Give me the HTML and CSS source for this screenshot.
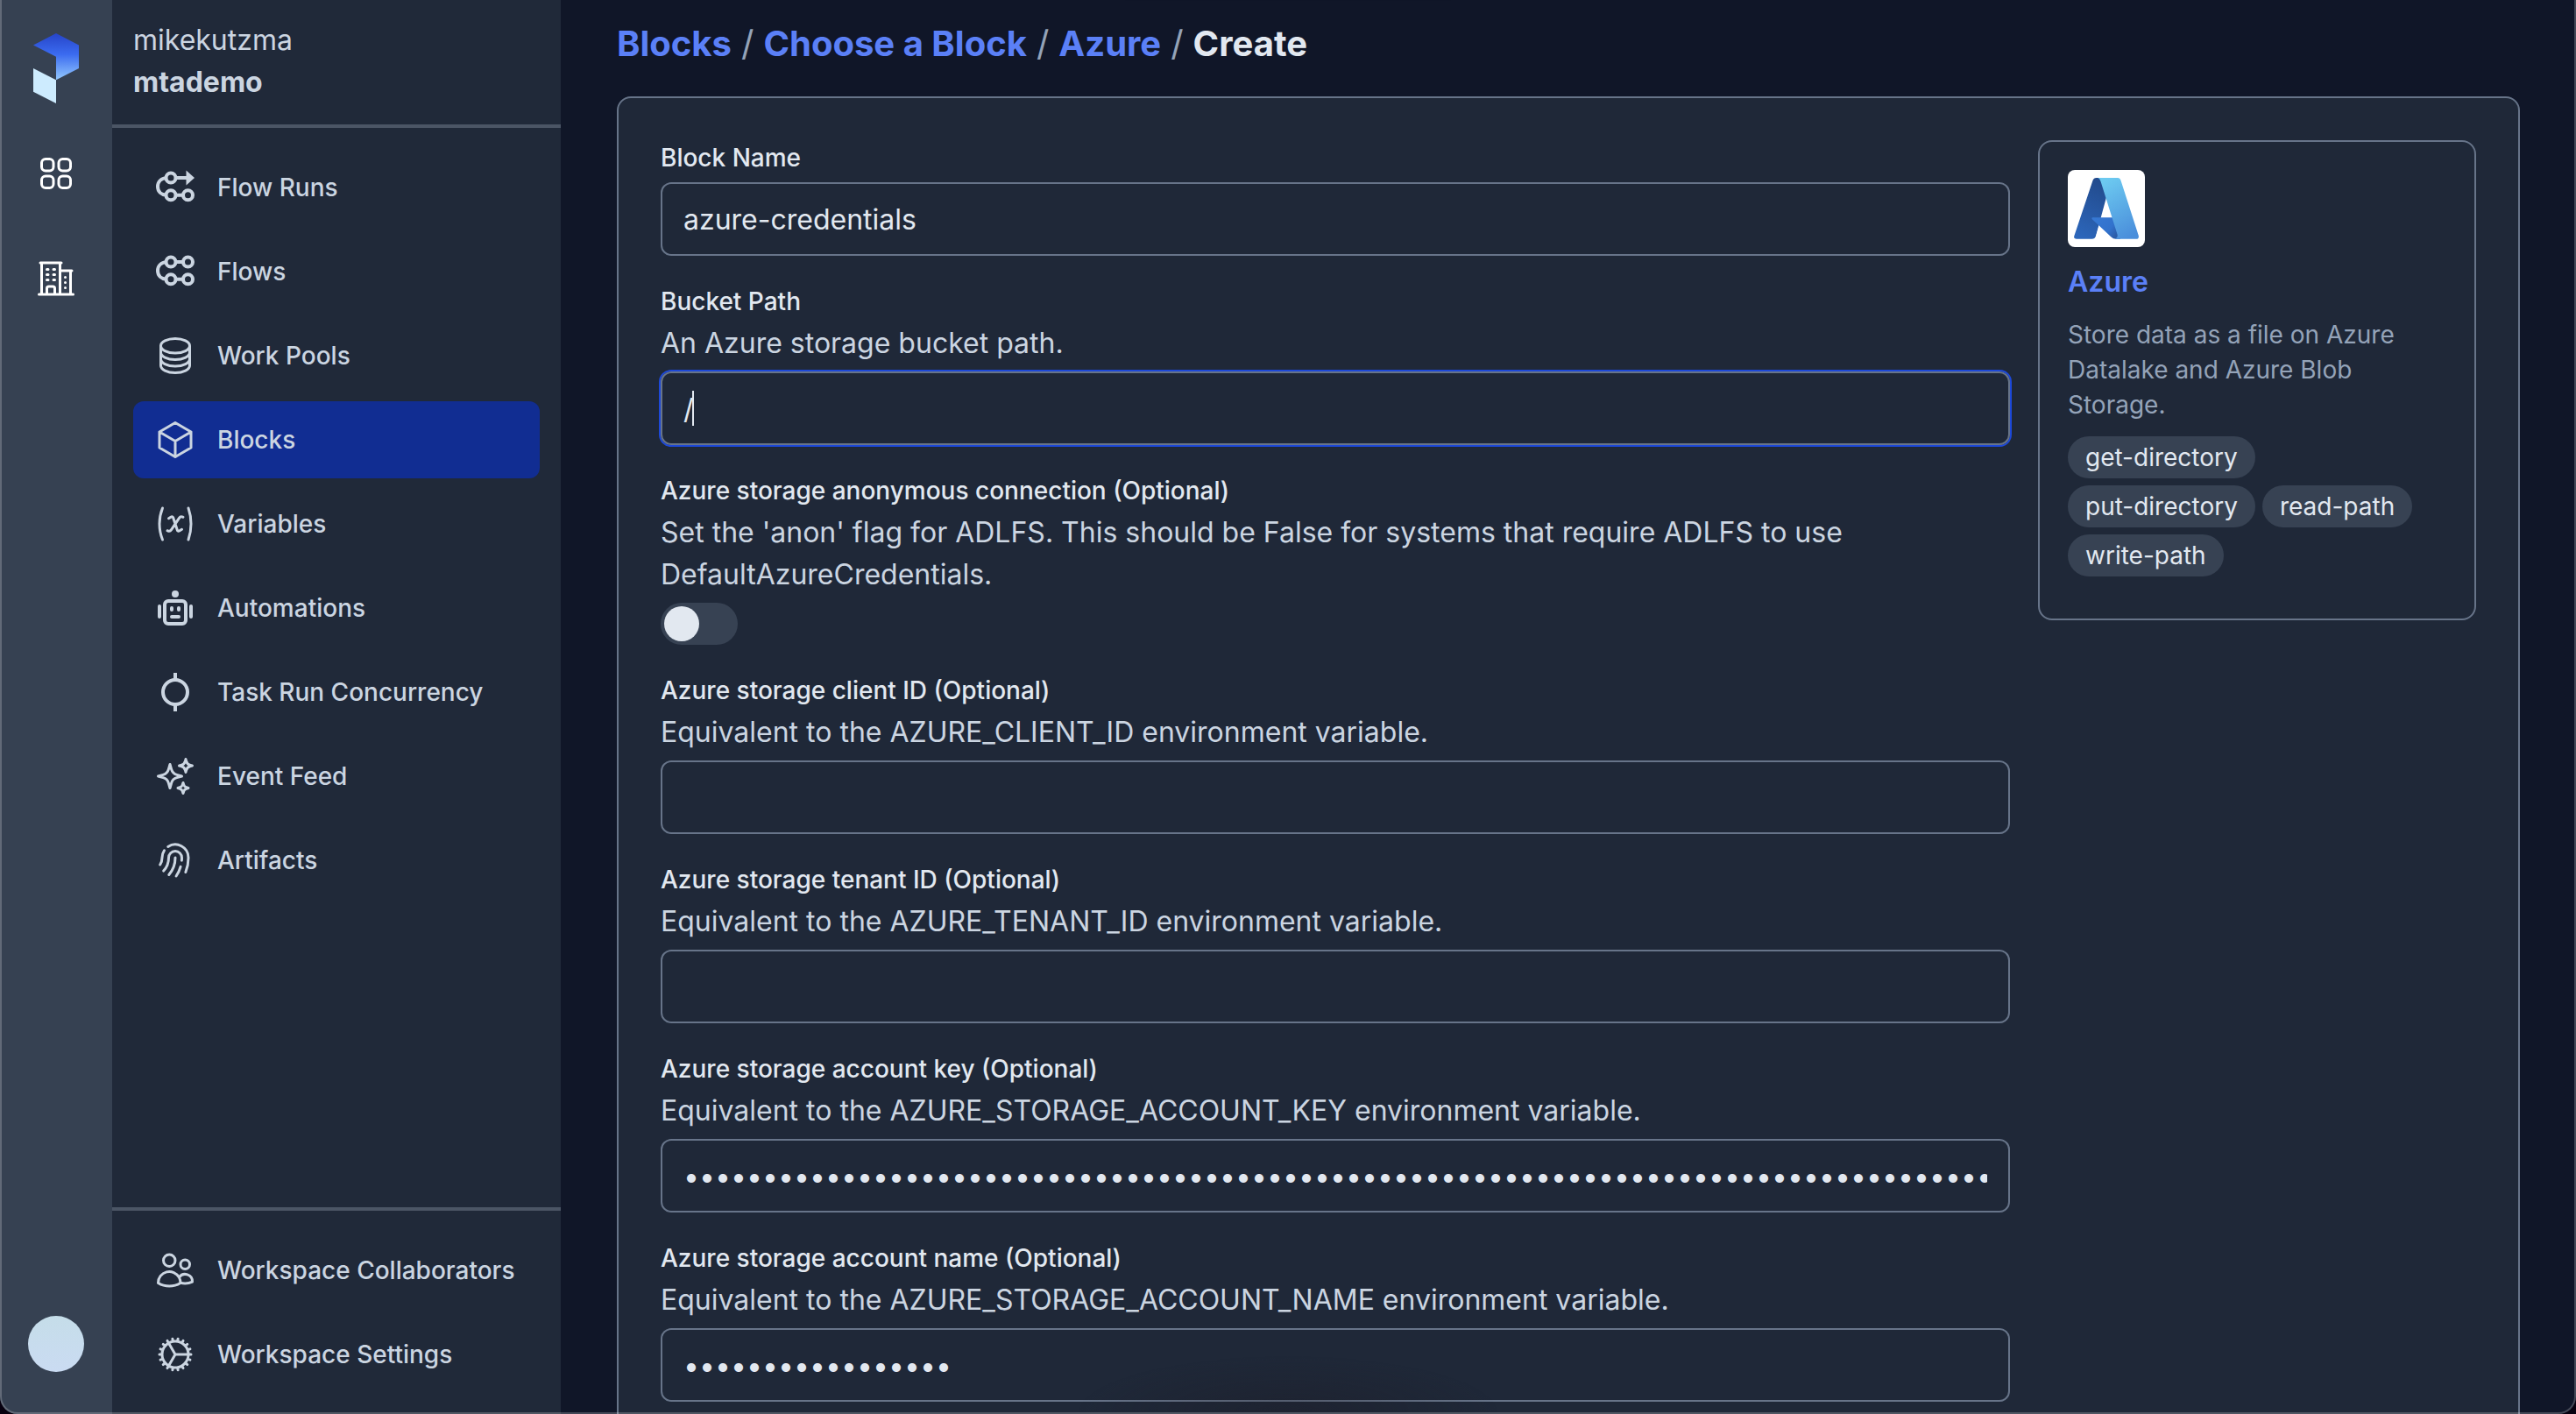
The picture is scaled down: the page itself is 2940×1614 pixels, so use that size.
FILE: index.html
```html
<!DOCTYPE html>
<html lang="en">
<head>
<meta charset="utf-8">
<meta name="viewport" content="width=device-width, initial-scale=1">
<title>Create Azure Block</title>
<link rel="stylesheet" href="styles.css">
</head>
<body>
<div class="app">
  <aside class="rail">
    <a class="rail-logo" href="#" aria-label="Home">
      <svg width="52" height="80" viewBox="0 0 52 80">
        <defs>
          <linearGradient id="logo-fill" x1="0" y1="0" x2="0" y2="1">
            <stop offset="0" stop-color="#2644c8"/>
            <stop offset=".45" stop-color="#3b6bf0"/>
            <stop offset="1" stop-color="#93c8fd"/>
          </linearGradient>
        </defs>
        <path fill="url(#logo-fill)" d="M26 0 52 13.4V40L26 53.3V26.7L0 13.4Z"/>
        <path fill="#cdebfe" d="M0 40 26 53.3V80L0 66.7Z"/>
      </svg>
    </a>
    <nav class="rail-nav" aria-label="Account">
      <a class="rail-link" href="#" aria-label="Workspaces">
        <svg class="icon" viewBox="0 0 24 24"><path d="M3.75 6A2.25 2.25 0 016 3.75h2.25A2.25 2.25 0 0110.5 6v2.25a2.25 2.25 0 01-2.25 2.25H6a2.25 2.25 0 01-2.25-2.25V6zM3.75 15.75A2.25 2.25 0 016 13.5h2.25a2.25 2.25 0 012.25 2.25V18a2.25 2.25 0 01-2.25 2.25H6A2.25 2.25 0 013.75 18v-2.25zM13.5 6a2.25 2.25 0 012.25-2.25H18A2.25 2.25 0 0120.25 6v2.25A2.25 2.25 0 0118 10.5h-2.25a2.25 2.25 0 01-2.25-2.25V6zM13.5 15.75a2.25 2.25 0 012.25-2.25H18a2.25 2.25 0 012.25 2.25V18A2.25 2.25 0 0118 20.25h-2.25A2.25 2.25 0 0113.5 18v-2.25z"/></svg>
      </a>
      <a class="rail-link" href="#" aria-label="Organization">
        <svg class="icon" viewBox="0 0 24 24"><path d="M2.25 21h19.5m-18-18v18m10.5-18v18m6-13.5V21M6.75 6.75h.75m-.75 3h.75m-.75 3h.75m3-6h.75m-.75 3h.75m-.75 3h.75M6.75 21v-3.375c0-.621.504-1.125 1.125-1.125h2.25c.621 0 1.125.504 1.125 1.125V21M3 3h12m-.75 4.5H21m-3.75 3.75h.008v.008h-.008v-.008zm0 3h.008v.008h-.008v-.008zm0 3h.008v.008h-.008v-.008z"/></svg>
      </a>
    </nav>
    <button class="avatar" type="button" aria-label="Profile"></button>
  </aside>

  <aside class="sidebar">
    <header class="workspace">
      <div>mikekutzma</div>
      <div class="workspace-name">mtademo</div>
    </header>
    <nav class="nav nav-main" aria-label="Workspace">
      <a class="nav-link" href="#">
        <svg class="icon icon-flow" viewBox="0 0 48 48"><circle cx="19" cy="13" r="5.5"/><circle cx="19" cy="32.8" r="5.5"/><circle cx="38.5" cy="32.8" r="5.5"/><path d="M14 13C8 13.5 4 17.5 4 23s4 9.300 10 9.800M24.500 13H37M24.500 32.800H33"/><path class="solid" d="M36.500 4.500 46 13l-9.500 8.500Z"/></svg>
        Flow Runs</a>
      <a class="nav-link" href="#">
        <svg class="icon icon-flow" viewBox="0 0 48 48"><circle cx="19" cy="13" r="5.5"/><circle cx="38.500" cy="13" r="5.5"/><circle cx="19" cy="32.800" r="5.5"/><circle cx="38.500" cy="32.800" r="5.5"/><path d="M14 13C8 13.500 4 17.500 4 23s4 9.300 10 9.800M24.500 13H33M24.500 32.800H33"/></svg>
        Flows</a>
      <a class="nav-link" href="#">
        <svg class="icon" viewBox="0 0 24 24"><path d="M20.25 6.375c0 2.278-3.694 4.125-8.25 4.125S3.75 8.653 3.75 6.375m16.5 0c0-2.278-3.694-4.125-8.25-4.125S3.75 4.097 3.75 6.375m16.5 0v11.25c0 2.278-3.694 4.125-8.25 4.125s-8.25-1.847-8.25-4.125V6.375m16.5 0v3.75m-16.500-3.750v3.750m16.500 0v3.750C20.250 16.153 16.556 18 12 18s-8.250-1.847-8.250-4.125v-3.750m16.500 0c0 2.278-3.694 4.125-8.250 4.125s-8.250-1.847-8.250-4.125"/></svg>
        Work Pools</a>
      <a class="nav-link nav-link-active" href="#" aria-current="page">
        <svg class="icon" viewBox="0 0 24 24"><path d="M21 7.500l-9-5.250L3 7.500m18 0l-9 5.250m9-5.250v9l-9 5.250M3 7.500l9 5.250M3 7.500v9l9 5.250m0-9v9"/></svg>
        Blocks</a>
      <a class="nav-link" href="#">
        <svg class="icon" viewBox="0 0 24 24"><path d="M4.745 3A23.933 23.933 0 003 12c0 3.183.62 6.220 1.745 9M19.500 3c.967 2.780 1.500 5.817 1.500 9s-.533 6.220-1.500 9M8.250 8.885l1.444-.89a.75.75 0 011.105.402l2.402 7.206a.75.75 0 001.104.401l1.445-.889m-8.250.75l.213.09a1.687 1.687 0 002.062-.617l4.450-6.676a1.688 1.688 0 012.062-.618l.213.09"/></svg>
        Variables</a>
      <a class="nav-link" href="#">
        <svg class="icon icon-bot" viewBox="0 0 48 48"><rect x="12" y="16" width="24" height="26" rx="4"/><path d="M6 22v12M42 22v12M20 24v2M28 24v2M20 34h8"/><circle class="solid" cx="24" cy="8" r="4"/></svg>
        Automations</a>
      <a class="nav-link" href="#">
        <svg class="icon icon-task" viewBox="0 0 48 48"><circle cx="24" cy="24" r="14"/><path d="M24 2v8M24 38v8"/></svg>
        Task Run Concurrency</a>
      <a class="nav-link" href="#">
        <svg class="icon" viewBox="0 0 24 24"><path d="M9.813 15.904L9 18.750l-.813-2.846a4.500 4.500 0 00-3.090-3.090L2.250 12l2.846-.813a4.500 4.500 0 003.090-3.090L9 5.250l.813 2.846a4.500 4.500 0 003.090 3.090L15.750 12l-2.846.813a4.500 4.500 0 00-3.090 3.090zM18.259 8.715L18 9.750l-.259-1.035a3.375 3.375 0 00-2.455-2.456L14.250 6l1.036-.259a3.375 3.375 0 002.455-2.456L18 2.250l.259 1.035a3.375 3.375 0 002.456 2.456L21.750 6l-1.035.259a3.375 3.375 0 00-2.456 2.456zM16.894 20.567L16.500 21.750l-.394-1.183a2.250 2.250 0 00-1.423-1.423L13.500 18.750l1.183-.394a2.250 2.250 0 001.423-1.423l.394-1.183.394 1.183a2.250 2.250 0 001.423 1.423l1.183.394-1.183.394a2.250 2.250 0 00-1.423 1.423z"/></svg>
        Event Feed</a>
      <a class="nav-link" href="#">
        <svg class="icon" viewBox="0 0 24 24"><path d="M7.864 4.243A7.500 7.500 0 0119.500 10.500c0 2.920-.556 5.709-1.568 8.268M5.742 6.364A7.465 7.465 0 004.500 10.500a7.464 7.464 0 01-1.150 3.993m1.989 3.559A11.209 11.209 0 008.250 10.500a3.750 3.750 0 117.500 0c0 .527-.021 1.049-.064 1.565M12 10.500a14.940 14.940 0 01-3.600 9.750m6.633-4.596a18.666 18.666 0 01-2.485 5.330"/></svg>
        Artifacts</a>
    </nav>
    <nav class="nav nav-foot" aria-label="Workspace administration">
      <a class="nav-link" href="#">
        <svg class="icon" viewBox="0 0 24 24"><path d="M15 19.128a9.380 9.380 0 002.625.372 9.337 9.337 0 004.121-.952 4.125 4.125 0 00-7.533-2.493M15 19.128v-.003c0-1.113-.285-2.160-.786-3.070M15 19.128v.106A12.318 12.318 0 018.624 21c-2.331 0-4.512-.645-6.374-1.766l-.001-.109a6.375 6.375 0 0111.964-3.070M12 6.375a3.375 3.375 0 11-6.750 0 3.375 3.375 0 016.750 0zm8.250 2.250a2.625 2.625 0 11-5.250 0 2.625 2.625 0 015.250 0z"/></svg>
        Workspace Collaborators</a>
      <a class="nav-link" href="#">
        <svg class="icon" viewBox="0 0 24 24"><path d="M4.500 12a7.500 7.500 0 0015 0m-15 0a7.500 7.500 0 1115 0m-15 0H3m16.500 0H21m-1.500 0H12m-8.457 3.077l1.410-.513m14.095-5.130l1.410-.513M5.106 17.785l1.150-.964m11.490-9.642l1.149-.964M7.501 19.795l.750-1.300m7.500-12.990l.750-1.300m-6.063 16.658l.260-1.477m2.605-14.772l.260-1.477m0 17.726l-.260-1.477M10.698 4.614l-.260-1.477M16.500 19.794l-.750-1.299M7.500 4.205L12 12m6.894 5.785l-1.149-.964M6.256 7.178l-1.150-.964m15.352 8.864l-1.410-.513M4.954 9.435l-1.410-.514M12.002 12l-3.750 6.495"/></svg>
        Workspace Settings</a>
    </nav>
  </aside>

  <main class="main">
    <nav class="crumbs" aria-label="Breadcrumb">
      <a href="#">Blocks</a>
      <span class="crumb-sep">/</span>
      <a href="#">Choose a Block</a>
      <span class="crumb-sep">/</span>
      <a href="#">Azure</a>
      <span class="crumb-sep">/</span>
      <span class="crumb-current">Create</span>
    </nav>

    <section class="panel">
      <form class="form">
        <div class="field">
          <label class="label" for="block-name">Block Name</label>
          <input class="input" id="block-name" type="text" value="azure-credentials">
        </div>
        <div class="field">
          <label class="label" for="bucket-path">Bucket Path</label>
          <p class="help">An Azure storage bucket path.</p>
          <div class="input-wrap">
            <input class="input input-own-caret" id="bucket-path" type="text" value="/" autofocus>
            <span class="caret"></span>
          </div>
        </div>
        <div class="field">
          <label class="label" for="anon">Azure storage anonymous connection (Optional)</label>
          <p class="help">Set the 'anon' flag for ADLFS. This should be False for systems that require ADLFS to use DefaultAzureCredentials.</p>
          <input class="toggle" id="anon" type="checkbox" role="switch">
        </div>
        <div class="field">
          <label class="label" for="client-id">Azure storage client ID (Optional)</label>
          <p class="help">Equivalent to the AZURE_CLIENT_ID environment variable.</p>
          <input class="input" id="client-id" type="text">
        </div>
        <div class="field">
          <label class="label" for="tenant-id">Azure storage tenant ID (Optional)</label>
          <p class="help">Equivalent to the AZURE_TENANT_ID environment variable.</p>
          <input class="input" id="tenant-id" type="text">
        </div>
        <div class="field">
          <label class="label" for="account-key">Azure storage account key (Optional)</label>
          <p class="help">Equivalent to the AZURE_STORAGE_ACCOUNT_KEY environment variable.</p>
          <input class="input" id="account-key" type="password" value="0000000000000000000000000000000000000000000000000000000000000000000000000000000000000000000000000000">
        </div>
        <div class="field">
          <label class="label" for="account-name">Azure storage account name (Optional)</label>
          <p class="help">Equivalent to the AZURE_STORAGE_ACCOUNT_NAME environment variable.</p>
          <input class="input" id="account-name" type="password" value="00000000000000000">
        </div>
      </form>

      <aside class="type-card">
        <svg class="type-logo" viewBox="0 0 88 88">
          <defs>
            <linearGradient id="az-left" x1=".6" y1="0" x2=".3" y2="1"><stop offset="0" stop-color="#224a8c"/><stop offset="1" stop-color="#2c66ba"/></linearGradient>
            <linearGradient id="az-right" x1=".3" y1="0" x2=".7" y2="1"><stop offset="0" stop-color="#6cc9f0"/><stop offset="1" stop-color="#4a8edb"/></linearGradient>
            <linearGradient id="az-mid" x1="0" y1="0" x2="1" y2=".6"><stop offset="0" stop-color="#3779d4"/><stop offset=".7" stop-color="#3272cc"/><stop offset="1" stop-color="#2a5ca8"/></linearGradient>
          </defs>
          <path fill="url(#az-left)" d="M32.500 9H50L32 75.500Q30.800 78.700 27.500 78.700H10Q6.200 78.700 7.400 75L28.500 12Q29.500 9 32.500 9Z"/>
          <path fill="#fff" d="M44.500 39 50.500 55H38.500Z"/>
          <path fill="#fff" d="M35.500 64 50 79H31Z"/>
          <path fill="url(#az-mid)" d="M28.500 54.300H52L60 78.700H55Q51.500 78.700 49.500 76.500L27.800 56.200Q26.600 54.300 28.500 54.300Z"/>
          <path fill="url(#az-right)" d="M34.500 9H57Q59.500 9 60.500 12L80.800 75Q81.500 78.700 78 78.700H53.500Q58 77.500 56.200 72.500L37.500 13Q36.500 9.800 34.500 9Z"/>
        </svg>
        <a class="type-name" href="#">Azure</a>
        <p class="type-text">Store data as a file on Azure Datalake and Azure Blob Storage.</p>
        <ul class="tags">
          <li class="tag">get-directory</li>
          <li class="tag">put-directory</li>
          <li class="tag">read-path</li>
          <li class="tag">write-path</li>
        </ul>
      </aside>
    </section>
  </main>
</div>
</body>
</html>
```

FILE: styles.css
```css
* {
  box-sizing: border-box;
}

body {
  margin: 0;
  background: #07000f;
  color: #cbd5e1;
  font-family: Inter, "Liberation Sans", sans-serif;
  font-size: 32px;
  line-height: 48px;
}

p,
ul {
  margin: 0;
  padding: 0;
}

a {
  color: inherit;
  text-decoration: none;
}

.app {
  display: flex;
  height: 100vh;
  overflow: hidden;
  background: #101628;
  border-radius: 0 0 20px 20px;
}

/* Window edge and the soft shade over the bottom of the page */
.app::after {
  content: "";
  position: fixed;
  inset: 0;
  border: solid rgba(255, 255, 255, 0.22);
  border-width: 0 2px 2px;
  border-radius: 0 0 20px 20px;
  background: radial-gradient(ellipse 240px 64px at 50% 100%, rgba(28, 24, 32, 0.3), transparent);
  pointer-events: none;
}

.icon {
  flex: none;
  width: 48px;
  height: 48px;
  fill: none;
  stroke: currentColor;
  stroke-width: 1.5;
  stroke-linecap: round;
  stroke-linejoin: round;
}

.icon .solid {
  fill: currentColor;
  stroke: none;
}

.icon-flow,
.icon-task {
  stroke-width: 4;
  stroke-linecap: butt;
}

.icon-bot {
  stroke-width: 4;
}

/* Rail */
.rail {
  flex: none;
  display: flex;
  flex-direction: column;
  align-items: center;
  width: 128px;
  padding: 38px 0 48px;
  background: #364152;
  color: #fff;
}

.rail-logo {
  display: flex;
}

.rail-nav {
  display: flex;
  flex-direction: column;
  gap: 32px;
  margin-top: 36px;
}

.rail-link {
  display: flex;
  padding: 20px;
}

.avatar {
  width: 64px;
  height: 64px;
  margin-top: auto;
  padding: 0;
  border: 0;
  border-radius: 50%;
  background: linear-gradient(#c5dde9, #cadbf2);
}

/* Sidebar */
.sidebar {
  flex: none;
  display: flex;
  flex-direction: column;
  width: 512px;
  background: #202939;
}

.workspace {
  padding: 22px 24px 24px;
  border-bottom: 4px solid #4b5565;
}

.workspace-name {
  font-weight: 700;
}

.nav {
  display: flex;
  flex-direction: column;
  gap: 8px;
  padding: 24px;
}

.nav-main {
  flex: 1;
}

.nav-foot {
  border-top: 4px solid #4b5565;
}

.nav-link {
  display: flex;
  align-items: center;
  gap: 24px;
  padding: 20px 24px;
  border-radius: 12px;
  font-size: 28px;
  font-weight: 500;
}

.nav-link-active {
  background: #112d92;
}

/* Main column */
.main {
  flex: 1;
  min-width: 0;
  padding: 22px 64px 0;
  overflow: hidden;
}

.crumbs {
  display: flex;
  gap: 11px;
  margin-bottom: 32px;
  color: #5b80f7;
  font-size: 40px;
  font-weight: 700;
  line-height: 56px;
}

.crumb-sep {
  color: #94a3b8;
  font-weight: 400;
}

.crumb-current {
  color: #e2e8f0;
}

.panel {
  display: grid;
  grid-template-columns: minmax(0, 1fr) 500px;
  align-items: start;
  gap: 32px;
  padding: 48px;
  border: 2px solid #677489;
  border-radius: 16px;
  background: #1f2838;
}

.form {
  display: flex;
  flex-direction: column;
  gap: 32px;
}

.field {
  display: flex;
  flex-direction: column;
  align-items: flex-start;
}

.label {
  color: #e2e8f0;
  font-size: 28px;
  font-weight: 500;
  line-height: 40px;
}

.help {
  margin-top: 4px;
}

.input {
  width: 100%;
  height: 84px;
  margin-top: 8px;
  padding: 0 24px;
  border: 2px solid #677489;
  border-radius: 12px;
  outline: 0;
  background: transparent;
  color: #e2e8f0;
  font: inherit;
}

.input:focus {
  box-shadow: 0 0 0 2px #1d48d8;
}

.input-wrap {
  position: relative;
  display: flex;
  width: 100%;
}

.input-own-caret {
  caret-color: transparent;
}

.caret {
  position: absolute;
  bottom: 22px;
  left: 36px;
  width: 2px;
  height: 40px;
  background: #e2e8f0;
}

.toggle {
  appearance: none;
  display: flex;
  width: 88px;
  height: 48px;
  margin: 8px 0 0;
  padding: 4px;
  border-radius: 24px;
  background: #374253;
}

.toggle::before {
  content: "";
  width: 40px;
  height: 40px;
  border-radius: 50%;
  background: #e2e8f0;
}

.toggle:checked::before {
  margin-left: auto;
}

/* Block type summary */
.type-card {
  display: flex;
  flex-direction: column;
  align-items: flex-start;
  padding: 32px 32px 48px;
  border: 2px solid #677489;
  border-radius: 16px;
}

.type-logo {
  width: 88px;
  height: 88px;
  border-radius: 8px;
  background: #fff;
}

.type-name {
  margin-top: 16px;
  color: #5b80f7;
  font-weight: 600;
}

.type-text {
  margin-top: 16px;
  color: #94a3b8;
  font-size: 28px;
  line-height: 40px;
}

.tags {
  display: flex;
  flex-wrap: wrap;
  gap: 8px;
  margin-top: 16px;
  list-style: none;
}

.tag {
  padding: 4px 20px;
  border-radius: 24px;
  background: #374253;
  color: #e2e8f0;
  font-size: 28px;
  line-height: 40px;
}
```
